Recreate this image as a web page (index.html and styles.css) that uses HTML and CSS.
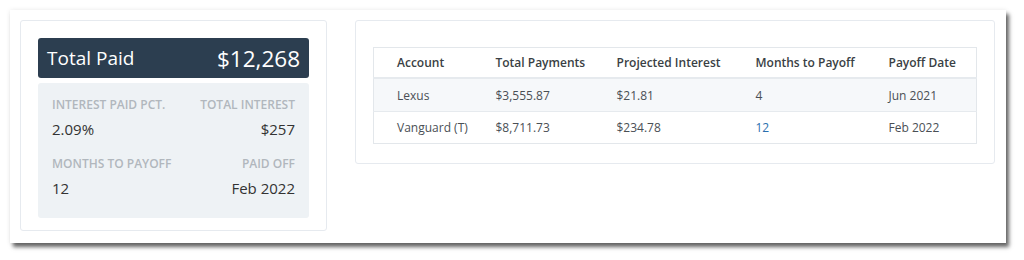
FILE: index.html
```html
<!DOCTYPE html>
<html>
<head>
<meta charset="utf-8">
<link rel="stylesheet" href="styles.css">
</head>
<body>
<div class="frame">
  <div class="panel">
    <div class="card summary">
      <div class="total">
        <span class="total-label">Total Paid</span>
        <span class="total-value">$12,268</span>
      </div>
      <div class="stats">
        <div class="stat">
          <div class="stat-label">Interest Paid Pct.</div>
          <div class="stat-value">2.09%</div>
        </div>
        <div class="stat right">
          <div class="stat-label">Total Interest</div>
          <div class="stat-value">$257</div>
        </div>
        <div class="stat">
          <div class="stat-label">Months to Payoff</div>
          <div class="stat-value">12</div>
        </div>
        <div class="stat right">
          <div class="stat-label">Paid Off</div>
          <div class="stat-value">Feb 2022</div>
        </div>
      </div>
    </div>
    <div class="card detail">
      <table class="accounts">
        <colgroup>
          <col class="c1"><col class="c2"><col class="c3"><col class="c4"><col class="c5">
        </colgroup>
        <thead>
          <tr>
            <th>Account</th>
            <th>Total Payments</th>
            <th>Projected Interest</th>
            <th>Months to Payoff</th>
            <th>Payoff Date</th>
          </tr>
        </thead>
        <tbody>
          <tr class="striped">
            <td>Lexus</td>
            <td>$3,555.87</td>
            <td>$21.81</td>
            <td>4</td>
            <td>Jun 2021</td>
          </tr>
          <tr>
            <td>Vanguard (T)</td>
            <td>$8,711.73</td>
            <td>$234.78</td>
            <td class="link">12</td>
            <td>Feb 2022</td>
          </tr>
        </tbody>
      </table>
    </div>
  </div>
</div>
</body>
</html>
```

FILE: styles.css
```css
html, body {
  margin: 0;
  padding: 0;
  background: #ffffff;
}
body {
  font-family: "Open Sans", "Liberation Sans", sans-serif;
  color: #333;
}
.frame {
  padding: 10px 18px 17px 10px;
}
.panel {
  background: #fff;
  width: 996px;
  height: 233px;
  box-sizing: border-box;
  padding: 10px 11px 10px 10px;
  display: flex;
  align-items: flex-start;
  gap: 28px;
  box-shadow: 3px 4px 4px rgba(0,0,0,0.6), 0 0 5px rgba(0,0,0,0.08);
}
.card {
  border: 1px solid #e6eaef;
  border-radius: 3px;
  background: #fff;
  box-sizing: border-box;
}
.summary {
  width: 307px;
  height: 211px;
  padding: 17px 17px 12px 17px;
  display: flex;
  flex-direction: column;
  gap: 5px;
}
.total {
  height: 40px;
  background: #2c3e50;
  border-radius: 3px;
  display: flex;
  align-items: center;
  justify-content: space-between;
  padding: 0 9px 0 9px;
  color: #fff;
}
.total-label {
  font-size: 19px;
}
.total-value {
  font-size: 22.5px;
}
.stats {
  flex: 1;
  background: #eef2f5;
  border-radius: 3px;
  padding: 14px 14px 0 14px;
  display: grid;
  grid-template-columns: 1fr 1fr;
  row-gap: 17px;
  align-content: start;
}
.stat.right {
  text-align: right;
}
.stat-label {
  font-size: 12px;
  font-weight: 600;
  text-transform: uppercase;
  color: #b1b7bd;
  line-height: 16px;
}
.stat-value {
  font-size: 15px;
  line-height: 20px;
  margin-top: 6px;
  color: #333;
}
.detail {
  width: 640px;
  height: 144px;
  padding: 26px 17px 21px 17px;
}
.accounts {
  width: 100%;
  border-collapse: collapse;
  border: 1px solid #e3e7eb;
  font-size: 12px;
  table-layout: fixed;
  white-space: nowrap;
}
.c1 { width: 99px; }
.c2 { width: 121px; }
.c3 { width: 139px; }
.c4 { width: 133px; }
.accounts th {
  text-align: left;
  font-weight: 600;
  color: #3a3f44;
  height: 29px;
  padding: 0 0 0 23px;
  border-bottom: 2px solid #e6eaee;
}
.accounts td {
  height: 31px;
  padding: 0 0 0 23px;
  color: #4a4f55;
  border-top: 1px solid #e6eaee;
}
.accounts thead + tbody tr:first-child td {
  border-top: none;
  height: 32px;
}
.striped td {
  background: #f6f8fa;
}
.accounts td.link {
  color: #2a6fae;
}
```
